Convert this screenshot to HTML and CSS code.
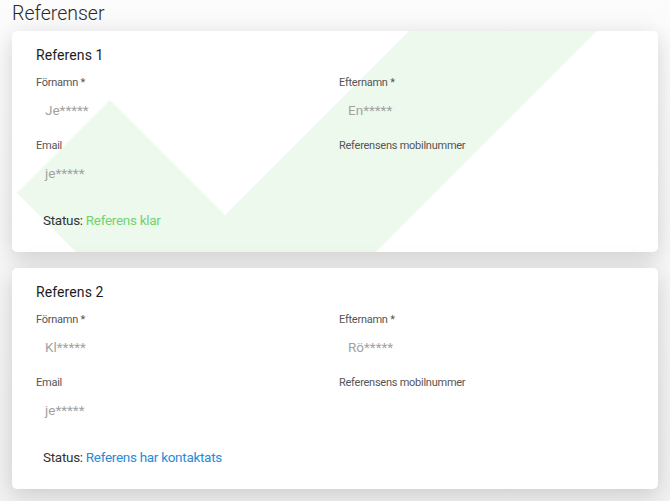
FILE: index.html
```html
<!DOCTYPE html>
<html lang="sv">
<head>
  <meta charset="UTF-8">
  <meta name="viewport" content="width=device-width, initial-scale=1">
  <title>Referenser</title>
  <link rel="stylesheet" href="styles.css">
</head>
<body>

  <h1 class="page-title">Referenser</h1>

  <!-- Referens 1 (klar) -->
  <section class="ref-card">
    <svg class="check-bg" aria-hidden="true">
      <polygon points="98,69 213,184 528,-131 716,-131 214,371 5,162"></polygon>
    </svg>
    <h2 class="ref-title">Referens 1</h2>
    <div class="fields">
      <div class="field">
        <div class="field-label">Förnamn *</div>
        <div class="field-value">Je*****</div>
      </div>
      <div class="field">
        <div class="field-label">Efternamn *</div>
        <div class="field-value">En*****</div>
      </div>
      <div class="field">
        <div class="field-label">Email</div>
        <div class="field-value">je*****</div>
      </div>
      <div class="field">
        <div class="field-label">Referensens mobilnummer</div>
        <div class="field-value"></div>
      </div>
    </div>
    <p class="status">Status: <span class="status-done">Referens klar</span></p>
  </section>

  <!-- Referens 2 (kontaktad) -->
  <section class="ref-card">
    <h2 class="ref-title">Referens 2</h2>
    <div class="fields">
      <div class="field">
        <div class="field-label">Förnamn *</div>
        <div class="field-value">Kl*****</div>
      </div>
      <div class="field">
        <div class="field-label">Efternamn *</div>
        <div class="field-value">Rö*****</div>
      </div>
      <div class="field">
        <div class="field-label">Email</div>
        <div class="field-value">je*****</div>
      </div>
      <div class="field">
        <div class="field-label">Referensens mobilnummer</div>
        <div class="field-value"></div>
      </div>
    </div>
    <p class="status">Status: <span class="status-contacted">Referens har kontaktats</span></p>
  </section>

</body>
</html>
```

FILE: styles.css
```css
/* Reset */
* {
  margin: 0;
  padding: 0;
  box-sizing: border-box;
}

body {
  font-family: Roboto, "Liberation Sans", sans-serif;
  background: linear-gradient(180deg, #fcfcfc 0%, #f1f1f1 100%);
  color: #333;
  padding: 0 12px 12px;
  min-height: 100vh;
}

/* Page heading */
.page-title {
  font-size: 19.5px;
  font-weight: 300;
  line-height: 26px;
  color: #2a2a2a;
  padding-top: 1px;
  margin-bottom: 4px;
}

/* Reference card */
.ref-card {
  position: relative;
  overflow: hidden;
  background: #fff;
  border-radius: 5px;
  padding: 14px 24px 22px;
  margin-bottom: 16px;
  box-shadow: 0 8px 20px rgba(0, 0, 0, 0.1), 0 0 30px rgba(0, 0, 0, 0.07);
}

/* Big faded check mark behind a finished reference */
.check-bg {
  position: absolute;
  top: 0;
  left: 0;
  width: 100%;
  height: 100%;
  pointer-events: none;
}

.check-bg polygon {
  fill: #eef9ee;
}

.ref-title,
.fields,
.status {
  position: relative;
}

.ref-title {
  font-size: 14px;
  font-weight: 400;
  line-height: 20px;
  color: #1c1c1c;
  letter-spacing: 0.1px;
  margin-bottom: 10px;
}

/* Two-column field grid */
.fields {
  display: grid;
  grid-template-columns: 303px 1fr;
  row-gap: 18px;
}

.field-label {
  font-size: 11px;
  line-height: 16px;
  color: #555;
  letter-spacing: -0.25px;
  margin-bottom: 9px;
}

.field-value {
  font-size: 13.5px;
  line-height: 20px;
  height: 20px;
  color: #a2a2a2;
  padding-left: 9px;
}

.status {
  font-size: 13.5px;
  line-height: 20px;
  color: #333;
  letter-spacing: -0.3px;
  padding-left: 7px;
  margin-top: 27px;
}

.status-done {
  color: #6fd36f;
}

.status-contacted {
  color: #2b8ad6;
}
```
